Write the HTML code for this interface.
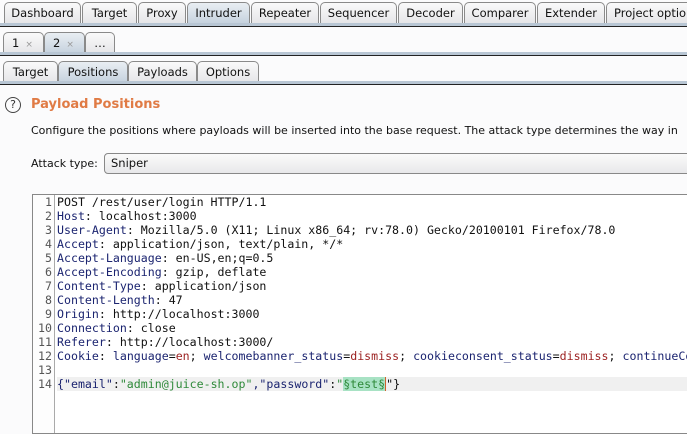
<!DOCTYPE html>
<html><head><meta charset="utf-8"><style>
*{margin:0;padding:0;box-sizing:border-box}
body{width:687px;height:425px;overflow:hidden;background:#fbfbfc;font-family:"DejaVu Sans","Liberation Sans",sans-serif;font-size:11.5px;color:#111;position:relative}
.t{position:absolute;height:21px;border:1px solid #8a8a8a;border-bottom:none;border-radius:5px 5px 0 0;background:linear-gradient(#fafafa,#e6e6e8);text-align:center;line-height:20px;white-space:nowrap;overflow:hidden}
.t.s{background:linear-gradient(#e9eef3,#c6d2de);}
.bar{position:absolute;left:0;width:687px;height:4px;background:#b8c6d4;border-bottom:1.5px solid #222}
.x{color:#999;font-size:9px;margin-left:6px}
.ed{position:absolute;left:32px;top:194px;width:660px;height:240px;border:1px solid #888;background:#fff}
.g{position:absolute;left:0;top:0;width:22px;height:100%;border-right:1px solid #aaa;background:#fdfdfd}
.code{position:absolute;left:0;top:0px;font-family:"DejaVu Sans Mono","Liberation Mono",monospace;font-size:11.6px;line-height:14px;white-space:pre}
.ln{display:inline-block;width:19px;text-align:right;color:#555;margin-right:5px}
.k{color:#1b2470}.r{color:#9c2222}.gr{color:#2f8a3a}
.hl{background:#f0f0f0;display:inline-block;width:640px}
.p{background:#a8e2c4;color:#2f8a3a}
</style></head><body>
<div class="t" style="left:4px;top:2px;width:77px">Dashboard</div>
<div class="t" style="left:82px;top:2px;width:55px">Target</div>
<div class="t" style="left:138px;top:2px;width:48px">Proxy</div>
<div class="t s" style="left:187px;top:2px;width:63px">Intruder</div>
<div class="t" style="left:251px;top:2px;width:68px">Repeater</div>
<div class="t" style="left:320px;top:2px;width:77px">Sequencer</div>
<div class="t" style="left:398px;top:2px;width:65px">Decoder</div>
<div class="t" style="left:464px;top:2px;width:72px">Comparer</div>
<div class="t" style="left:537px;top:2px;width:68px">Extender</div>
<div class="t" style="left:606px;top:2px;width:100px;text-align:left;padding-left:7px">Project options</div>
<div class="bar" style="top:23px"></div>
<div class="t" style="left:3px;top:32px;width:41px;text-align:left;padding-left:8px">1<span class="x">×</span></div>
<div class="t s" style="left:44px;top:32px;width:41px;text-align:left;padding-left:8px">2<span class="x">×</span></div>
<div class="t" style="left:85px;top:32px;width:30px">…</div>
<div class="bar" style="top:52px"></div>
<div class="t" style="left:3px;top:61px;width:55px">Target</div>
<div class="t s" style="left:58px;top:61px;width:70px">Positions</div>
<div class="t" style="left:128px;top:61px;width:69px">Payloads</div>
<div class="t" style="left:197px;top:61px;width:62px">Options</div>
<div class="bar" style="top:81px"></div>
<div style="position:absolute;left:5px;top:97px;width:16px;height:16px;border:1.3px solid #444;border-radius:50%;text-align:center;line-height:14px;font-size:11px;color:#333">?</div>
<div style="position:absolute;left:31px;top:97px;font-weight:bold;font-size:13px;color:#e07b45">Payload Positions</div>
<div style="position:absolute;left:31px;top:124px;font-size:11px;white-space:nowrap">Configure the positions where payloads will be inserted into the base request. The attack type determines the way in</div>
<div style="position:absolute;left:31px;top:157px;font-size:11px">Attack type:</div>
<div style="position:absolute;left:104px;top:153px;width:600px;height:21px;border:1px solid #888;border-radius:4px;background:linear-gradient(#fafafa,#e8e8ea);padding-left:6px;line-height:19px;font-size:11.5px">Sniper</div>
<div class="ed"><div class="g"></div><div class="code"><span class="ln">1</span>POST /rest/user/login HTTP/1.1
<span class="ln">2</span><span class="k">Host</span>: localhost:3000
<span class="ln">3</span><span class="k">User-Agent</span>: Mozilla/5.0 (X11; Linux x86_64; rv:78.0) Gecko/20100101 Firefox/78.0
<span class="ln">4</span><span class="k">Accept</span>: application/json, text/plain, */*
<span class="ln">5</span><span class="k">Accept-Language</span>: en-US,en;q=0.5
<span class="ln">6</span><span class="k">Accept-Encoding</span>: gzip, deflate
<span class="ln">7</span><span class="k">Content-Type</span>: application/json
<span class="ln">8</span><span class="k">Content-Length</span>: 47
<span class="ln">9</span><span class="k">Origin</span>: http://localhost:3000
<span class="ln">10</span><span class="k">Connection</span>: close
<span class="ln">11</span><span class="k">Referer</span>: http://localhost:3000/
<span class="ln">12</span><span class="k">Cookie</span>: <span class="k">language</span>=<span class="r">en</span>; <span class="k">welcomebanner_status</span>=<span class="r">dismiss</span>; <span class="k">cookieconsent_status</span>=<span class="r">dismiss</span>; <span class="k">continueCode</span>
<span class="ln">13</span>
<span class="ln">14</span><span class="hl"><span class="k">{"email"</span>:<span class="gr">"admin@juice-sh.op"</span><span class="k">,"password"</span>:<span class="gr">"</span><span class="p">§test§</span><span style="border-left:1.5px solid #d0602a">"</span>}</span></div></div>
</body></html>
